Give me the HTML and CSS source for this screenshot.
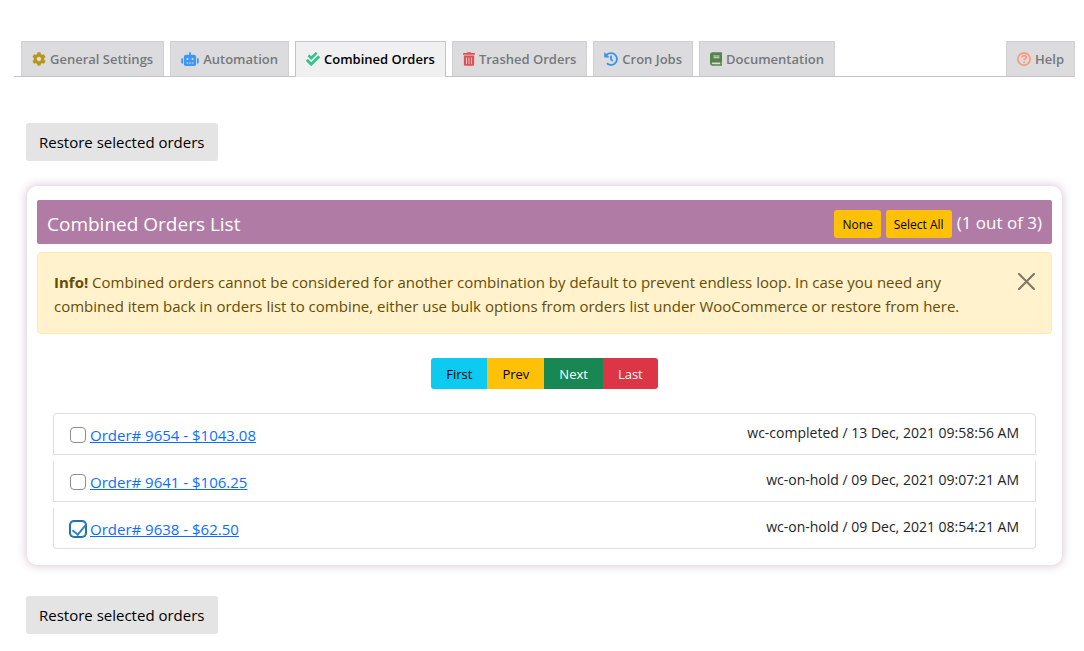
FILE: index.html
```
<!DOCTYPE html>
<html lang="en">
<head>
<meta charset="utf-8">
<meta name="viewport" content="width=device-width, initial-scale=1">
<title>Combined Orders</title>
<link rel="stylesheet" href="styles.css">
</head>
<body>
<nav class="tabs">
  <a class="tab" href="#general"><svg class="icon gear" viewBox="0 0 512 512"><path d="M487.4 315.7l-42.6-24.6c4.3-23.2 4.3-47 0-70.2l42.6-24.6c4.9-2.8 7.1-8.6 5.5-14-11.1-35.6-30-67.8-54.7-94.6-3.8-4.1-10-5.1-14.8-2.3L380.8 110c-17.9-15.4-38.5-27.3-60.8-35.1V25.8c0-5.6-3.9-10.5-9.4-11.7-36.7-8.2-74.3-7.8-109.2 0-5.5 1.2-9.4 6.1-9.4 11.7V75c-22.2 7.9-42.8 19.8-60.8 35.1L88.7 85.5c-4.9-2.8-11-1.9-14.8 2.3-24.7 26.7-43.6 58.9-54.7 94.6-1.7 5.4.6 11.2 5.5 14L67.3 221c-4.3 23.2-4.3 47 0 70.2l-42.6 24.6c-4.9 2.8-7.1 8.6-5.5 14 11.1 35.6 30 67.8 54.7 94.6 3.8 4.1 10 5.1 14.8 2.3l42.6-24.6c17.9 15.4 38.5 27.3 60.8 35.1v49.2c0 5.6 3.9 10.5 9.4 11.7 36.7 8.2 74.3 7.8 109.2 0 5.5-1.2 9.4-6.1 9.4-11.7v-49.2c22.2-7.9 42.8-19.8 60.8-35.1l42.6 24.6c4.9 2.8 11 1.9 14.8-2.3 24.7-26.7 43.6-58.9 54.7-94.6 1.5-5.5-.7-11.3-5.6-14.1zM256 336c-44.1 0-80-35.9-80-80s35.9-80 80-80 80 35.9 80 80-35.9 80-80 80z"/></svg>General Settings</a>
  <a class="tab" href="#automation"><svg class="icon icon-wide robot" viewBox="0 0 640 512"><path d="M32,224H64V416H32A32,32,0,0,1,0,384V256A32,32,0,0,1,32,224Zm512-48V448a64,64,0,0,1-64,64H160a64,64,0,0,1-64-64V176a80,80,0,0,1,80-80H288V32a32,32,0,0,1,64,0V96H464A80,80,0,0,1,544,176ZM264,256a40,40,0,1,0-40,40A40,40,0,0,0,264,256Zm-8,128H192v32h64Zm96,0H288v32h64ZM456,256a40,40,0,1,0-40,40A40,40,0,0,0,456,256Zm-8,128H384v32h64ZM640,256V384a32,32,0,0,1-32,32H576V224h32A32,32,0,0,1,640,256Z"/></svg>Automation</a>
  <a class="tab tab-active" href="#combined" aria-current="page"><svg class="icon checks" viewBox="0 0 512 512"><path d="M505 174.8l-39.6-39.6c-9.4-9.4-24.6-9.4-33.9 0L192 374.7 80.6 263.2c-9.4-9.4-24.6-9.4-33.9 0L7 302.9c-9.4 9.4-9.4 24.6 0 34L175 505c9.4 9.4 24.6 9.4 33.9 0l296-296.2c9.4-9.5 9.4-24.7.1-34zm-324.3 106c6.2 6.3 16.4 6.3 22.6 0l208-208.2c6.2-6.3 6.2-16.4 0-22.6L366.1 4.7c-6.2-6.3-16.4-6.3-22.6 0L192 156.2l-55.4-55.5c-6.2-6.3-16.4-6.3-22.6 0L68.7 146c-6.2 6.3-6.2 16.4 0 22.6l112 112.2z"/></svg>Combined Orders</a>
  <a class="tab" href="#trashed"><svg class="icon icon-narrow trash" viewBox="0 0 448 512"><path d="M32 464a48 48 0 0 0 48 48h288a48 48 0 0 0 48-48V128H32zm272-256a16 16 0 0 1 32 0v224a16 16 0 0 1-32 0zm-96 0a16 16 0 0 1 32 0v224a16 16 0 0 1-32 0zm-96 0a16 16 0 0 1 32 0v224a16 16 0 0 1-32 0zM432 32H312l-9.4-18.7A24 24 0 0 0 281.1 0H166.8a23.7 23.7 0 0 0-21.4 13.3L136 32H16A16 16 0 0 0 0 48v32a16 16 0 0 0 16 16h416a16 16 0 0 0 16-16V48a16 16 0 0 0-16-16z"/></svg>Trashed Orders</a>
  <a class="tab" href="#cron"><svg class="icon history" viewBox="0 0 512 512"><path d="M504 255.531c.253 136.64-111.18 248.372-247.82 248.468-59.015.042-113.223-20.53-155.822-54.911-11.077-8.94-11.905-25.541-1.839-35.607l11.267-11.267c8.609-8.609 22.353-9.551 31.891-1.984C173.062 425.135 212.781 440 256 440c101.705 0 184-82.311 184-184 0-101.705-82.311-184-184-184-48.814 0-93.149 18.969-126.068 49.932l50.754 50.754c10.08 10.08 2.941 27.314-11.313 27.314H24c-8.837 0-16-7.163-16-16V38.627c0-14.254 17.234-21.393 27.314-11.314l49.372 49.372C129.209 34.136 189.552 8 256 8c136.81 0 247.747 110.78 248 247.531zm-180.912 78.784l9.823-12.63c8.138-10.463 6.253-25.542-4.21-33.679L288 256.349V152c0-13.255-10.745-24-24-24h-16c-13.255 0-24 10.745-24 24v135.651l65.409 50.874c10.463 8.137 25.541 6.253 33.679-4.21z"/></svg>Cron Jobs</a>
  <a class="tab" href="#docs"><svg class="icon icon-narrow book" viewBox="0 0 448 512"><path d="M448 360V24c0-13.3-10.7-24-24-24H96C43 0 0 43 0 96v320c0 53 43 96 96 96h328c13.3 0 24-10.7 24-24v-16c0-7.5-3.5-14.3-8.9-18.7-4.2-15.4-4.2-59.3 0-74.7 5.4-4.3 8.9-11.1 8.9-18.6zM128 134c0-3.3 2.7-6 6-6h212c3.3 0 6 2.7 6 6v20c0 3.3-2.7 6-6 6H134c-3.3 0-6-2.7-6-6v-20zm0 64c0-3.3 2.7-6 6-6h212c3.3 0 6 2.7 6 6v20c0 3.3-2.7 6-6 6H134c-3.3 0-6-2.7-6-6v-20zm253.4 250H96c-17.7 0-32-14.3-32-32 0-17.6 14.4-32 32-32h285.4c-1.9 17.1-1.9 46.9 0 64z"/></svg>Documentation</a>
  <a class="tab tab-help" href="#help"><svg class="icon help" viewBox="0 0 16 16"><circle cx="8" cy="8" r="7"/><path d="M5.600 6.300c.2-1.300 1.100-2.100 2.500-2.100s2.500.8 2.500 2.100c0 1.700-2.500 1.600-2.500 3.200M8.100 10.900v1.700"/></svg>Help</a>
</nav>
<main class="content">
  <button class="restore" type="button">Restore selected orders</button>
  <section class="card">
    <header class="card-head">
      <h1 class="card-title">Combined Orders List</h1>
      <div class="card-tools">
        <button class="pick" type="button">None</button>
        <button class="pick" type="button">Select All</button>
        <span class="count">(1 out of 3)</span>
      </div>
    </header>
    <div class="alert" role="alert">
      <p class="alert-text"><strong>Info!</strong> Combined orders cannot be considered for another combination by default to prevent endless loop. In case you need any combined item back in orders list to combine, either use bulk options from orders list under WooCommerce or restore from here.</p>
      <button class="close" type="button" aria-label="Close"><svg class="close-icon" viewBox="0 0 16 16"><path d="M1 1l14 14M15 1L1 15"/></svg></button>
    </div>
    <div class="pager">
      <button class="page first" type="button">First</button>
      <button class="page prev" type="button">Prev</button>
      <button class="page next" type="button">Next</button>
      <button class="page last" type="button">Last</button>
    </div>
    <ul class="orders">
      <li class="order">
        <input class="check" type="checkbox" id="o9654" aria-labelledby="l9654">
        <a class="order-link" id="l9654" href="#9654">Order# 9654 - $1043.08</a>
        <span class="order-meta">wc-completed / 13 Dec, 2021 09:58:56 AM</span>
      </li>
      <li class="order">
        <input class="check" type="checkbox" id="o9641" aria-labelledby="l9641">
        <a class="order-link" id="l9641" href="#9641">Order# 9641 - $106.25</a>
        <span class="order-meta">wc-on-hold / 09 Dec, 2021 09:07:21 AM</span>
      </li>
      <li class="order">
        <input class="check" type="checkbox" id="o9638" aria-labelledby="l9638" checked>
        <a class="order-link" id="l9638" href="#9638">Order# 9638 - $62.50</a>
        <span class="order-meta">wc-on-hold / 09 Dec, 2021 08:54:21 AM</span>
      </li>
    </ul>
  </section>
  <button class="restore" type="button">Restore selected orders</button>
</main>
</body>
</html>
```
FILE: styles.css
```
* { box-sizing: border-box; }

body {
  margin: 0;
  background: #fff;
  color: #212529;
  font: 15px/24px "Open Sans", "Noto Sans", sans-serif;
}

button { font-family: inherit; border: 0; cursor: pointer; }

/* Tabs */
.tabs {
  display: flex;
  gap: 6px;
  margin: 41px 9px 0 14px;
  padding-left: 7px;
  border-bottom: 1px solid #c3c4c7;
}
.tab {
  display: flex;
  align-items: center;
  gap: 4px;
  height: 35px;
  padding: 0 10px;
  border: 1px solid #d0d0d3;
  border-bottom: 0;
  background: #dcdcde;
  color: #75787c;
  font-size: 13px;
  font-weight: 600;
  text-decoration: none;
  white-space: nowrap;
}
.tab-active {
  height: 36px;
  margin-bottom: -1px;
  padding-bottom: 2px;
  border-color: #c3c4c7;
  background: #f0f0f1;
  color: #000;
}
.tab-help { margin-left: auto; }
.icon { width: 14px; height: 14px; fill: currentColor; }
.icon-wide { width: 18px; }
.icon-narrow { width: 12px; }
.gear { color: #b8961c; }
.robot { color: #3d97f5; }
.checks { color: #36c08e; }
.trash { color: #e04f52; }
.history { color: #3592ee; }
.book { color: #56844a; }
.help { fill: none; stroke: #fb9a7c; stroke-width: 2; }

/* Page body */
.content { padding: 46px 22px 17px 26px; }
.restore {
  display: block;
  height: 38px;
  padding: 0 13px;
  border-radius: 3px;
  background: #e4e4e4;
  color: #000;
  font-size: 15px;
}
.card {
  margin: 25px 0 31px 1px;
  padding: 14px 10px 16px;
  border-radius: 10px;
  box-shadow: 0 0 10px 1px #d8c9d5;
}
.card-head {
  display: flex;
  align-items: center;
  justify-content: space-between;
  height: 44px;
  padding: 0 10px;
  border-radius: 2px;
  background: #b07ca6;
  color: #fff;
}
.card-title { margin: 0; padding-top: 4px; font-size: 19px; font-weight: 400; }
.card-tools { display: flex; align-items: center; gap: 5px; }
.pick {
  height: 28px;
  margin-top: 4px;
  padding: 0 8px;
  border-radius: 3px;
  background: #ffc107;
  color: #000;
  font-size: 12px;
}
.count { padding-top: 2px; font-size: 17px; }

.alert {
  display: flex;
  align-items: flex-start;
  justify-content: space-between;
  margin-top: 8px;
  padding: 17px 16px 15px;
  border: 1px solid #ffe9b0;
  border-radius: 4px;
  background: #fff2cd;
  color: #664d03;
}
.alert-text { margin: 0; max-width: 932px; }
.close { padding: 3px 0 0; background: none; opacity: .5; }
.close-icon { display: block; width: 17px; height: 17px; fill: none; stroke: #000; stroke-width: 2; stroke-linecap: round; }

.pager { display: flex; justify-content: center; margin: 24px 0; }
.page { height: 31px; padding: 0 15px; font-size: 13px; }
.first { border-radius: 3px 0 0 3px; background: #0dcaf0; color: #000; }
.prev { background: #ffc107; color: #000; }
.next { background: #198754; color: #fff; }
.last { border-radius: 0 3px 3px 0; background: #dc3545; color: #fff; }

/* Orders */
.orders {
  display: flex;
  flex-direction: column;
  gap: 6px;
  margin: 0 16px;
  padding: 0;
  list-style: none;
}
.order {
  display: flex;
  align-items: center;
  gap: 4px;
  height: 41px;
  padding: 0 16px;
  border: 1px solid #dfdfdf;
  border-top: 0;
}
.order:first-child { height: 42px; border-top: 1px solid #dfdfdf; border-radius: 4px 4px 0 0; }
.order:last-child { border-radius: 0 0 4px 4px; }
.check {
  appearance: none;
  width: 16px;
  height: 16px;
  margin: 2px 0 0;
  border: 1px solid #8c8f94;
  border-radius: 4px;
  background: #fff;
}
.check:checked { border-color: #2271b1; box-shadow: 0 0 0 1px #2271b1; }
.check:checked::before {
  content: "";
  display: block;
  width: 6px;
  height: 11px;
  margin: 0 0 0 4px;
  border: solid #3582c4;
  border-width: 0 2px 2px 0;
  transform: rotate(40deg);
}
.order-link { padding-top: 2px; color: #0d6efd; }
.order-meta { margin-left: auto; padding-bottom: 2px; font-size: 14px; }
```
